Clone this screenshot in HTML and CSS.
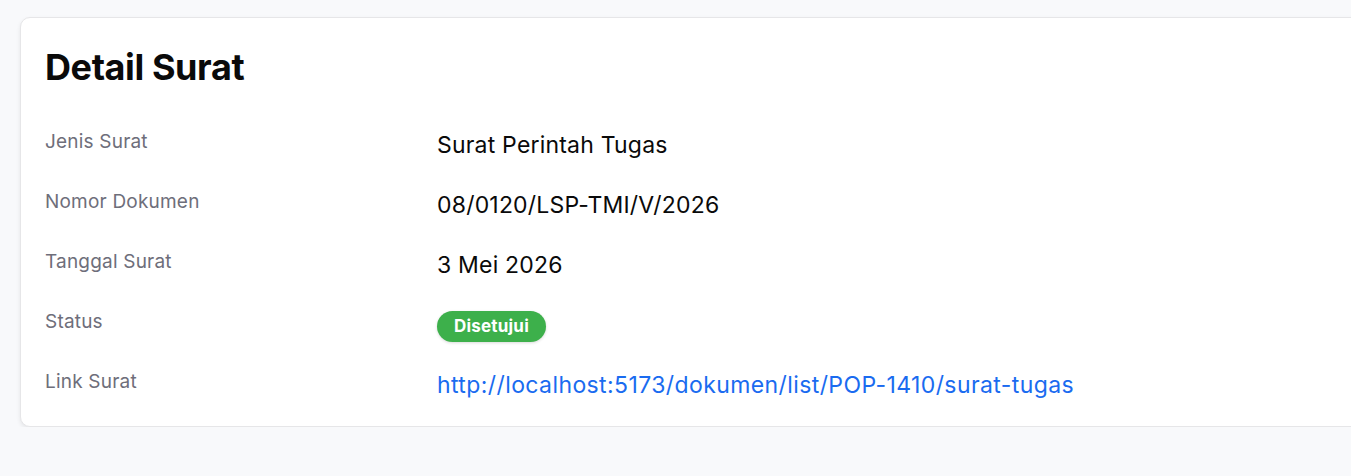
FILE: index.html
```html
<!DOCTYPE html>
<html lang="id">
<head>
    <meta charset="UTF-8">
    <meta name="viewport" content="width=device-width, initial-scale=1.0">
    <title>Detail Surat</title>
    <link rel="stylesheet" href="styles.css">
</head>
<body>
    <div class="card">
        <h1>Detail Surat</h1>

        <div class="detail-list">
            <div class="label">Jenis Surat</div>
            <div class="value">Surat Perintah Tugas</div>

            <div class="label">Nomor Dokumen</div>
            <div class="value">08/0120/LSP-TMI/V/2026</div>

            <div class="label">Tanggal Surat</div>
            <div class="value">3 Mei 2026</div>

            <div class="label">Status</div>
            <div class="value"><span class="badge">Disetujui</span></div>

            <div class="label">Link Surat</div>
            <div class="value">
                <a class="link" href="http://localhost:5173/dokumen/list/POP-1410/surat-tugas">http://localhost:5173/dokumen/list/POP-1410/surat-tugas</a>
            </div>
        </div>
    </div>
</body>
</html>
```

FILE: styles.css
```css
body {
    font-family: Inter, "Noto Sans", sans-serif;
    margin: 0;
    padding: 17px 0 0 20px;
    background-color: #f8f9fb;
    overflow: hidden;
}

.card {
    width: 1400px;
    background: #fff;
    border: 1px solid #e6e6e8;
    border-radius: 10px;
    box-shadow: 0 2px 4px rgba(0, 0, 0, 0.08);
    padding: 24px 24px 23px;
    box-sizing: border-box;
}

h1 {
    font-size: 36px;
    font-weight: 700;
    letter-spacing: -0.4px;
    color: #0a0a0a;
    margin: 5px 0 37px;
    line-height: 40px;
}

.detail-list {
    display: grid;
    grid-template-columns: 392px 1fr;
    row-gap: 21px;
}

.label {
    font-size: 19px;
    letter-spacing: 0.2px;
    color: #6e6e7a;
    line-height: 36px;
}

.value {
    font-size: 23px;
    letter-spacing: 0.2px;
    color: #0a0a0a;
    line-height: 36px;
    padding-top: 3px;
}

.badge {
    display: inline-block;
    vertical-align: middle;
    background-color: #3db04b;
    color: #fff;
    font-size: 17px;
    font-weight: 700;
    line-height: 31px;
    padding: 0 17px;
    border-radius: 16px;
    box-shadow: 0 1px 3px rgba(0, 0, 0, 0.15);
}

.link {
    color: #1a6bf0;
    letter-spacing: 0.4px;
    text-decoration: none;
}
```
